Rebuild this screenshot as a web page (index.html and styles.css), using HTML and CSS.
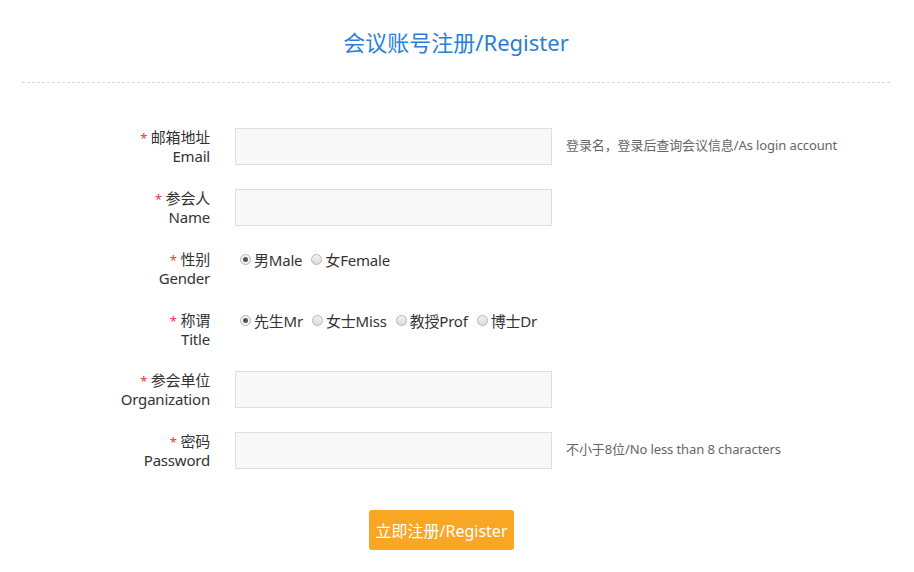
FILE: index.html
```html
<!DOCTYPE html>
<html lang="zh-CN">
<head>
<meta charset="utf-8">
<title>会议账号注册/Register</title>
<link rel="stylesheet" href="styles.css">
</head>
<body>
<div class="header">
  <h1 class="title">会议账号注册/Register</h1>
</div>
<form class="form">
  <div class="row">
    <div class="label"><span class="req">*</span> 邮箱地址<br>Email</div>
    <div class="field"><div class="input"></div></div>
    <div class="help">登录名，登录后查询会议信息/As login account</div>
  </div>
  <div class="row">
    <div class="label"><span class="req">*</span> 参会人<br>Name</div>
    <div class="field"><div class="input"></div></div>
  </div>
  <div class="row">
    <div class="label"><span class="req">*</span> 性别<br>Gender</div>
    <div class="field radios">
      <span class="opt"><span class="radio checked"></span>男Male</span>
      <span class="opt"><span class="radio"></span>女Female</span>
    </div>
  </div>
  <div class="row">
    <div class="label"><span class="req">*</span> 称谓<br>Title</div>
    <div class="field radios">
      <span class="opt"><span class="radio checked"></span>先生Mr</span>
      <span class="opt"><span class="radio"></span>女士Miss</span>
      <span class="opt"><span class="radio"></span>教授Prof</span>
      <span class="opt"><span class="radio"></span>博士Dr</span>
    </div>
  </div>
  <div class="row">
    <div class="label"><span class="req">*</span> 参会单位<br>Organization</div>
    <div class="field"><div class="input"></div></div>
  </div>
  <div class="row">
    <div class="label"><span class="req">*</span> 密码<br>Password</div>
    <div class="field"><div class="input"></div></div>
    <div class="help">不小于8位/No less than 8 characters</div>
  </div>
  <div class="actions">
    <button type="button" class="btn">立即注册/Register</button>
  </div>
</form>
</body>
</html>
```
FILE: styles.css
```css
html, body {
  margin: 0;
  padding: 0;
  background: #ffffff;
}
body {
  font-family: "Noto Sans", "Noto Sans CJK SC", sans-serif;
  color: #333333;
  font-size: 14px;
}
.header {
  margin: 0 24px 0 22px;
  padding: 27px 0 25px;
  border-bottom: 1px dashed #d9d9d9;
  text-align: center;
}
.title {
  margin: 0;
  font-size: 22px;
  line-height: 30px;
  font-weight: normal;
  color: #2b7fd2;
}
.form {
  margin-top: 45px;
}
.row {
  display: grid;
  grid-template-columns: 210px 316px auto;
  height: 40px;
  margin-bottom: 21px;
}
.row:nth-child(5),
.row:nth-child(6) {
  margin-top: -1px;
  margin-bottom: 22px;
}
.label {
  text-align: right;
  line-height: 19px;
  font-size: 15px;
  color: #333;
  letter-spacing: -0.2px;
  white-space: nowrap;
}
.req {
  color: #e03c3c;
  font-size: 13px;
  line-height: 0;
}
.field {
  margin-left: 25px;
}
.input {
  box-sizing: border-box;
  width: 317px;
  height: 37px;
  background: #f8f8f8;
  border: 1px solid #dedede;
}
.help {
  margin-left: 40px;
  font-size: 13px;
  letter-spacing: -0.1px;
  color: #666;
  line-height: 20px;
  padding-top: 7px;
  white-space: nowrap;
}
.radios {
  display: flex;
  align-items: flex-start;
  gap: 9px;
  padding-left: 5px;
  line-height: 20px;
  font-size: 15px;
  letter-spacing: -0.2px;
  white-space: nowrap;
}
.opt {
  display: inline-flex;
  align-items: center;
  height: 19px;
}
.radio {
  box-sizing: border-box;
  width: 11px;
  height: 11px;
  border-radius: 50%;
  border: 1px solid #b5b5b5;
  background: linear-gradient(#f2f2f2, #dcdcdc);
  margin-right: 3px;
  position: relative;
}
.radio.checked {
  background: #f4f4f4;
}
.radio.checked::after {
  content: "";
  position: absolute;
  left: 2px;
  top: 2px;
  width: 5px;
  height: 5px;
  border-radius: 50%;
  background: #555;
}
.actions {
  padding-left: 369px;
  padding-top: 16px;
}
.btn {
  width: 145px;
  height: 40px;
  border: none;
  border-radius: 3px;
  background: #f8a623;
  color: #ffffff;
  font-family: "Noto Sans", "Noto Sans CJK SC", sans-serif;
  font-size: 16px;
  padding: 0;
  cursor: pointer;
}
```
